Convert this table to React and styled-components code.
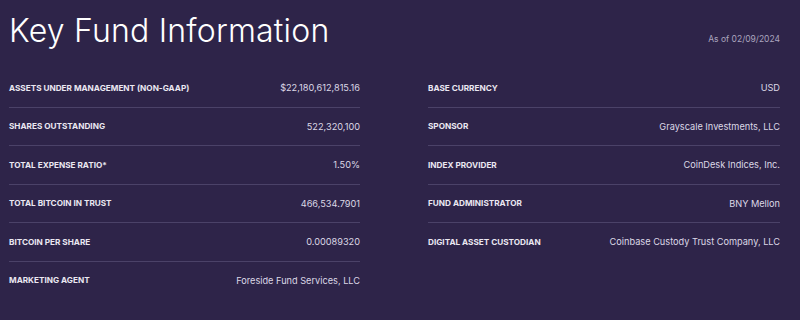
import React from 'react';
import styled, { createGlobalStyle } from 'styled-components';

const GlobalStyle = createGlobalStyle`
  html, body {
    margin: 0;
    padding: 0;
    background: #2e2449;
  }
  body {
    font-family: Inter, "Liberation Sans", sans-serif;
  }
`;

const leftRows = [
  ['Assets Under Management (Non-GAAP)', '$22,180,612,815.16'],
  ['Shares Outstanding', '522,320,100'],
  ['Total Expense Ratio*', '1.50%'],
  ['Total Bitcoin in Trust', '466,534.7901'],
  ['Bitcoin per Share', '0.00089320'],
  ['Marketing Agent', 'Foreside Fund Services, LLC'],
];

const rightRows = [
  ['Base Currency', 'USD'],
  ['Sponsor', 'Grayscale Investments, LLC'],
  ['Index Provider', 'CoinDesk Indices, Inc.'],
  ['Fund Administrator', 'BNY Mellon'],
  ['Digital Asset Custodian', 'Coinbase Custody Trust Company, LLC'],
];

const InfoColumn = ({ rows }) => (
  <Column>
    {rows.map(([label, value], i) => (
      <Row key={label} $last={i === rows.length - 1}>
        <Label>{label}</Label>
        <Value>{value}</Value>
      </Row>
    ))}
  </Column>
);

const App = () => (
  <Page>
    <GlobalStyle />
    <Header>
      <Title>Key Fund Information</Title>
      <AsOf>As of 02/09/2024</AsOf>
    </Header>
    <Columns>
      <InfoColumn rows={leftRows} />
      <InfoColumn rows={rightRows} />
    </Columns>
  </Page>
);

const Page = styled.div`
  width: 800px;
  height: 320px;
  box-sizing: border-box;
  padding: 11px 20px 0 9px;
  background: #2e2449;
  overflow: hidden;
`;

const Header = styled.header`
  display: flex;
  justify-content: space-between;
  align-items: baseline;
  margin-bottom: 18px;
`;

const Title = styled.h1`
  margin: 0;
  font-size: 32px;
  font-weight: 300;
  line-height: 40px;
  letter-spacing: 0.2px;
  color: #ffffff;
`;

const AsOf = styled.span`
  font-size: 8.5px;
  color: #aaa4bf;
`;

const Columns = styled.div`
  display: grid;
  grid-template-columns: 351px 352px;
  column-gap: 68px;
`;

const Column = styled.div`
  display: flex;
  flex-direction: column;
`;

const Row = styled.div`
  display: flex;
  justify-content: space-between;
  align-items: center;
  height: 37.5px;
  border-bottom: 1px solid ${(p) => (p.$last ? 'transparent' : '#4b4268')};
`;

const Label = styled.span`
  font-size: 8.2px;
  font-weight: 700;
  text-transform: uppercase;
  color: #ebe8f2;
`;

const Value = styled.span`
  font-size: 9.2px;
  font-weight: 400;
  color: #dcd8e6;
`;

export default App;
